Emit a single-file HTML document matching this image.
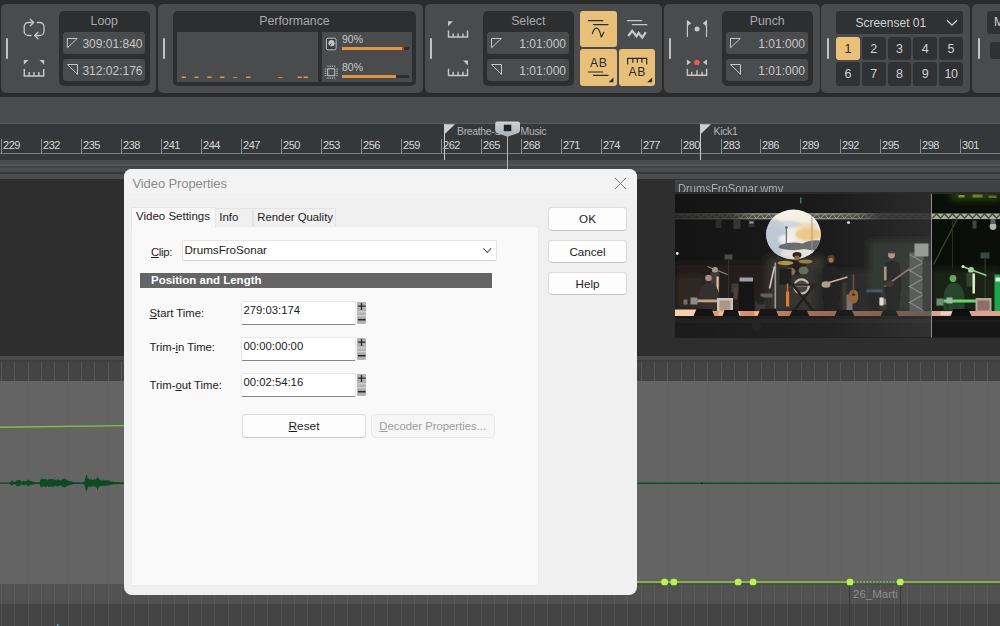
<!DOCTYPE html>
<html><head><meta charset="utf-8"><title>Video Properties</title>
<style>
html,body{margin:0;padding:0}
html{overflow:hidden;width:1000px;height:626px;background:#2a2b2d}
body{width:1000px;height:626px;overflow:hidden;position:relative;background:#2a2b2d;font-family:"Liberation Sans",sans-serif;}
.a{position:absolute}
.panel{position:absolute;top:4px;height:88.6px;background:#4a4b4d;border-radius:5px}
.hd{position:absolute;top:38px;width:2.1px;height:21px;background:#c2c2c2;border-radius:1.5px}
.dk{position:absolute;top:11px;height:75px;background:#2d2e30;border-radius:5px}
.fld{position:absolute;height:22px;background:#4a4b4d;border-radius:3px}
.ttl{position:absolute;top:14px;height:15px;line-height:15px;font-size:12.3px;color:#a9aaab;text-align:center}
.fv{position:absolute;height:22px;line-height:24.5px;font-size:12px;color:#c6c6c6;text-align:right}
.amber{position:absolute;background:#e8c07a;border-radius:3px}
.nb{position:absolute;width:23.5px;height:23.5px;background:#2f3133;border-radius:3px;color:#d2d2d2;font-size:12.5px;line-height:24px;text-align:center}
.nb.on{background:#e8c07a;color:#2b2b2b}
.tk{position:absolute;top:139px;width:1px;height:14px;background:#8c8d90}
.tl{position:absolute;top:138px;height:14px;line-height:14px;font-size:11px;letter-spacing:-0.55px;color:#d8d8d8}
.mk{position:absolute;top:125px;font-size:10.5px;letter-spacing:-0.35px;line-height:12px;color:#b4b5b7}
svg{position:absolute;overflow:visible}
/* dialog */
.dlg{position:absolute;left:124px;top:168px;width:513px;height:427px;font-size:11.3px;color:#1b1b1b}
.btn{position:absolute;box-sizing:border-box;background:#fdfdfd;border:1px solid #dcdcdc;border-bottom-color:#c6c6c6;border-radius:4px;text-align:center;font-size:11.6px;line-height:21px;height:23.5px}
.tab{position:absolute;white-space:nowrap;box-sizing:border-box;border:1px solid #e3e3e3;border-bottom:none;background:#f0f0f0;height:18px;top:40.2px;font-size:11.5px;line-height:17px}
.inp{position:absolute;box-sizing:border-box;left:117px;width:115px;height:23.5px;background:#fff;border:1px solid #e8e8e8;border-bottom:1px solid #868686;border-radius:2px;line-height:17.2px;padding-left:1.5px}
.lbl{position:absolute;left:25.5px;height:14px;line-height:14px}
u{text-decoration-thickness:1px;text-underline-offset:1px}
.spin{position:absolute;left:233px;width:9px;height:23px}
</style></head><body>

<!-- ===== TOOLBAR ===== -->
<div class="panel" style="left:1px;width:155px"></div>
<div class="panel" style="left:158px;width:265px"></div>
<div class="panel" style="left:425px;width:237px"></div>
<div class="panel" style="left:664px;width:155.5px"></div>
<div class="panel" style="left:821px;width:149px"></div>
<div class="panel" style="left:972px;width:40px"></div>
<div class="hd" style="left:6px"></div><div class="hd" style="left:163px"></div><div class="hd" style="left:430px"></div>
<div class="hd" style="left:669px"></div><div class="hd" style="left:826.5px"></div><div class="hd" style="left:977.5px"></div>

<!-- Loop -->
<div class="dk" style="left:59px;width:90.5px"></div>
<div class="ttl" style="left:59px;width:90.5px">Loop</div>
<div class="fld" style="left:63px;top:32px;width:82px"></div>
<div class="fld" style="left:63px;top:59px;width:82px"></div>
<div class="fv" style="left:63px;top:32px;width:79.5px">309:01:840</div>
<div class="fv" style="left:63px;top:59px;width:79.5px">312:02:176</div>

<!-- Performance -->
<div class="dk" style="left:173px;width:243px"></div>
<div class="ttl" style="left:173px;width:243px">Performance</div>
<div class="a" style="left:177px;top:32px;width:140.5px;height:49.5px;background:#4a4b4d"></div>
<div class="a" style="left:322px;top:32px;width:90px;height:49.5px;background:#4a4b4d"></div>
<div class="a" style="left:342px;top:33.3px;font-size:10.5px;line-height:12px;color:#c8c8c8">90%</div>
<div class="a" style="left:342px;top:61.3px;font-size:10.5px;line-height:12px;color:#c8c8c8">80%</div>
<div class="a" style="left:342px;top:46.5px;width:67px;height:3.5px;background:#2d2e30"></div>
<div class="a" style="left:342px;top:46.5px;width:60px;height:3.5px;background:#e09440"></div>
<div class="a" style="left:402px;top:46.5px;width:1.5px;height:3.5px;background:#d8352a"></div>
<div class="a" style="left:342px;top:74.5px;width:67px;height:3.5px;background:#2d2e30"></div>
<div class="a" style="left:342px;top:74.5px;width:53.6px;height:3.5px;background:#e09440"></div>

<!-- Select -->
<div class="dk" style="left:483px;width:90.5px"></div>
<div class="ttl" style="left:483px;width:90.5px">Select</div>
<div class="fld" style="left:487px;top:32px;width:82px"></div>
<div class="fld" style="left:487px;top:59px;width:82px"></div>
<div class="fv" style="left:487px;top:32px;width:79px">1:01:000</div>
<div class="fv" style="left:487px;top:59px;width:79px">1:01:000</div>
<div class="amber" style="left:580px;top:11px;width:37px;height:36px"></div>
<div class="amber" style="left:580px;top:49px;width:37px;height:37px"></div>
<div class="amber" style="left:618.6px;top:49px;width:36.7px;height:37px"></div>

<!-- Punch -->
<div class="dk" style="left:722px;width:90.5px"></div>
<div class="ttl" style="left:722px;width:90.5px">Punch</div>
<div class="fld" style="left:726px;top:32px;width:82px"></div>
<div class="fld" style="left:726px;top:59px;width:82px"></div>
<div class="fv" style="left:726px;top:32px;width:79px">1:01:000</div>
<div class="fv" style="left:726px;top:59px;width:79px">1:01:000</div>

<!-- Screenset -->
<div class="a" style="left:836.3px;top:11px;width:127px;height:23px;background:#2f3133;border-radius:3px"></div>
<div class="a" style="left:836.3px;top:11px;width:109px;height:23px;line-height:24.5px;text-align:center;font-size:12px;color:#d2d2d2">Screenset 01</div>
<div class="nb on" style="left:836.3px;top:36.6px">1</div>
<div class="nb" style="left:862px;top:36.6px">2</div>
<div class="nb" style="left:887.7px;top:36.6px">3</div>
<div class="nb" style="left:913.4px;top:36.6px">4</div>
<div class="nb" style="left:939.2px;top:36.6px">5</div>
<div class="nb" style="left:836.3px;top:62.4px">6</div>
<div class="nb" style="left:862px;top:62.4px">7</div>
<div class="nb" style="left:887.7px;top:62.4px">8</div>
<div class="nb" style="left:913.4px;top:62.4px">9</div>
<div class="nb" style="left:939.2px;top:62.4px;letter-spacing:-0.5px">10</div>
<!-- panel 6 -->
<div class="a" style="left:987px;top:11px;width:20px;height:22.5px;background:#2f3133;border-radius:3px"></div>
<div class="a" style="left:994px;top:11px;height:23px;line-height:23px;font-size:12px;color:#d2d2d2">M</div>
<div class="a" style="left:990px;top:42px;width:20px;height:16.5px;background:#2f3133;border-radius:3px"></div>

<!-- toolbar icons -->
<svg id="tbicons" style="left:0;top:0" width="1000" height="97" fill="none" stroke="#c6c6c6" stroke-width="1.2">
<!-- loop icon -->
<g stroke-linecap="round" stroke-linejoin="round" stroke-width="1.3">
<path d="M33.3 22.5H28.5a4.3 4.3 0 0 0-4.3 4.3v4.4a4.3 4.3 0 0 0 4.3 4.3H31"/>
<path d="M30.3 19.3L33.6 22.5L30.3 25.7"/>
<path d="M37.3 22.5H39.7a4.3 4.3 0 0 1 4.3 4.3v4.4a4.3 4.3 0 0 1-4.3 4.3H35"/>
<path d="M38 32.3L34.7 35.5L38 38.7"/>
</g>
<!-- loop ruler icon -->
<path d="M23.8 60h4.8l-4.8 4.8zM44.2 60h-4.8l4.8 4.8z" fill="#c6c6c6" stroke="none"/>
<path stroke-width="1.45" d="M24.3 69V76H43.7V69M29.2 72V76M34 72V76M38.8 72V76"/>
<!-- field triangles -->
<g stroke-width="1">
<path d="M67.4 38.5H77.2L67.4 47.8Z M67.5 64.5H77.5V74.3Z"/>
<path d="M491.5 38.5H501.3L491.5 47.8Z M491.5 64.5H501.5V74.3Z"/>
<path d="M730.5 38.5H740.3L730.5 47.8Z M730.5 64.5H740.5V74.3Z"/>
</g>
<!-- perf dashes -->
<path d="M181.6 77.3h4.4M194.3 77.3h4.3M207.3 77.3h4.4M220 77.3h4.5M246 77.3h4.5M297.5 77.3h4.5M303.6 77.3h4.4" stroke="#e09440" stroke-width="1.5"/>
<path d="M233 77.6h4.4M278 77.6h4.5" stroke="#e09440" stroke-width="0.9"/>
<!-- disk icon -->
<rect x="326.5" y="38.2" width="9.6" height="11.6" rx="1.6" fill="#3a3b3d" stroke="#bdbdbd" stroke-width="1"/>
<circle cx="331.5" cy="43.2" r="3.1" fill="#c4c4c4" stroke="none"/>
<path d="M329 46.5L331.5 43.5" stroke="#3a3b3d" stroke-width="0.9"/>
<!-- cpu icon -->
<rect x="327.7" y="68.7" width="7" height="7" stroke-width="1"/>
<path d="M328 65.5v1.5M330.2 65.5v1.5M332.4 65.5v1.5M334.6 65.5v1.5M328 77.3v1.5M330.2 77.3v1.5M332.4 77.3v1.5M334.6 77.3v1.5M324.8 69h1.5M324.8 71.2h1.5M324.8 73.4h1.5M324.8 75.6h1.5M336.3 69h1.5M336.3 71.2h1.5M336.3 73.4h1.5M336.3 75.6h1.5" stroke-width="0.9"/>
<!-- select icons -->
<path d="M448 21.2h5l-5 5zM468 60.4h-5l5 5z" fill="#c6c6c6" stroke="none"/>
<path stroke-width="1.45" d="M448.5 30.4V37H467.5V30.4M453.2 33.4V37M458.1 33.4V37M463 33.4V37"/>
<path stroke-width="1.45" d="M448.5 68.8V75.4H467.5V68.8M453.2 71.8V75.4M458.1 71.8V75.4M463 71.8V75.4"/>
<!-- select buttons -->
<g stroke="#2b2b2b" stroke-width="1.2" stroke-linecap="round">
<path d="M588.4 20.7H602.8M593.5 24.6H608"/>
<path d="M592.4 33.6C593.4 30 595 28.1 596.8 28.1C599.2 28.1 600 32.5 601.3 37.1L603.9 32.3" stroke-linejoin="round"/>
<path d="M588.5 72H602.8M593.6 75.4H608"/>
<path d="M627.6 64.5V58.4H646.7V64.5M632.8 58.4V62.8M637.3 58.4V62.8M641.9 58.4V62.8" stroke-linecap="butt"/>
</g>
<path d="M613.4 77.6V82.3H608.6zM652.1 77.6V82.3H647.3z" fill="#2b2b2b" stroke="none"/>
<text x="598.8" y="67" text-anchor="middle" font-family="Liberation Sans, sans-serif" font-size="12.2" letter-spacing="0.7" fill="#2b2b2b" stroke="none">AB</text>
<text x="637.3" y="75.5" text-anchor="middle" font-family="Liberation Sans, sans-serif" font-size="12.2" letter-spacing="0.7" fill="#2b2b2b" stroke="none">AB</text>
<path d="M626.9 20.7H642.2M631.8 24.6H647.3" stroke-width="1.3"/>
<path d="M628.3 36L632.1 30.8L636.5 36.2L638.6 33L642.3 37.6L645.8 32.2" stroke-width="2.3" stroke-linejoin="miter"/>
<!-- punch icons -->
<path d="M687.4 20.5V37M706.5 20.5V37"/>
<path d="M687.4 20.3L691.2 23.3L687.4 26.2zM706.5 20.3L702.7 23.3L706.5 26.2z" fill="#c6c6c6" stroke="none"/>
<circle cx="697" cy="29" r="2.5" fill="#c6c6c6" stroke="none"/>
<path d="M686.9 59.5L691 62.3L686.9 65.2zM707 59.5L702.9 62.3L707 65.2z" fill="#c6c6c6" stroke="none"/>
<circle cx="697" cy="62.4" r="2.7" fill="#ee5b5b" stroke="none"/>
<path stroke-width="1.45" d="M687.4 68.7V75.3H706.6V68.7M691.8 71.7V75.3M697 70.3V75.3M702 71.7V75.3"/>
<!-- screenset chevron -->
<path d="M947 20.3L952 25.2L957 20.3" stroke="#d2d2d2" stroke-width="1.2"/>

</svg>

<!-- ===== BAND + RULER ===== -->
<div class="a" style="left:0;top:97px;width:1000px;height:26px;background:#4a4b4d"></div>
<div class="a" style="left:0;top:123px;width:1000px;height:1px;background:#5b5c5e"></div>
<div class="a" style="left:0;top:124px;width:1000px;height:36px;background:#363739"></div>
<div class="a" style="left:0;top:153px;width:1000px;height:1px;background:#7b7c7f"></div>
<div class="tk" style="left:1px"></div>
<div class="tk" style="left:41px"></div>
<div class="tk" style="left:81px"></div>
<div class="tk" style="left:121px"></div>
<div class="tk" style="left:161px"></div>
<div class="tk" style="left:201px"></div>
<div class="tk" style="left:241px"></div>
<div class="tk" style="left:281px"></div>
<div class="tk" style="left:321px"></div>
<div class="tk" style="left:361px"></div>
<div class="tk" style="left:401px"></div>
<div class="tk" style="left:441px"></div>
<div class="tk" style="left:481px"></div>
<div class="tk" style="left:521px"></div>
<div class="tk" style="left:561px"></div>
<div class="tk" style="left:601px"></div>
<div class="tk" style="left:641px"></div>
<div class="tk" style="left:681px"></div>
<div class="tk" style="left:721px"></div>
<div class="tk" style="left:760px"></div>
<div class="tk" style="left:800px"></div>
<div class="tk" style="left:840px"></div>
<div class="tk" style="left:880px"></div>
<div class="tk" style="left:920px"></div>
<div class="tk" style="left:960px"></div>
<div class="tl" style="left:3.1px">229</div>
<div class="tl" style="left:43.1px">232</div>
<div class="tl" style="left:83.1px">235</div>
<div class="tl" style="left:123.1px">238</div>
<div class="tl" style="left:163.1px">241</div>
<div class="tl" style="left:203.1px">244</div>
<div class="tl" style="left:243.1px">247</div>
<div class="tl" style="left:283.1px">250</div>
<div class="tl" style="left:323.1px">253</div>
<div class="tl" style="left:363.1px">256</div>
<div class="tl" style="left:403.1px">259</div>
<div class="tl" style="left:443.1px">262</div>
<div class="tl" style="left:483.1px">265</div>
<div class="tl" style="left:523.1px">268</div>
<div class="tl" style="left:563.1px">271</div>
<div class="tl" style="left:603.1px">274</div>
<div class="tl" style="left:643.1px">277</div>
<div class="tl" style="left:683.1px">280</div>
<div class="tl" style="left:723.1px">283</div>
<div class="tl" style="left:762.1px">286</div>
<div class="tl" style="left:802.1px">289</div>
<div class="tl" style="left:842.1px">292</div>
<div class="tl" style="left:882.1px">295</div>
<div class="tl" style="left:922.1px">298</div>
<div class="tl" style="left:962.1px">301</div>
<div class="a" style="left:0;top:160px;width:1000px;height:19px;background:#4a4b4d"></div>
<div class="a" style="left:0;top:164px;width:1000px;height:1.5px;background:#545557"></div>
<div class="a" style="left:0;top:165.5px;width:1000px;height:2px;background:#434446"></div>
<div class="a" style="left:0;top:172px;width:1000px;height:2px;background:#363739"></div>
<!-- markers -->
<div class="a" style="left:444px;top:124px;width:1px;height:36px;background:#c9c9c9"></div>
<div class="a" style="left:700px;top:124px;width:1px;height:36px;background:#c9c9c9"></div>
<svg style="left:0;top:0" width="1000" height="170"><path d="M444 124.3h11l-11 10.5z M700 124.3h11l-11 10.5z" fill="#cfcfd1"/></svg>
<div class="mk" style="left:457px">Breathe-S</div>
<div class="mk" style="left:520.5px">Music</div>
<div class="mk" style="left:713.5px">Kick1</div>
<!-- playhead -->
<div class="a" style="left:507.2px;top:134px;width:1.2px;height:492px;background:#b4b4b4"></div>
<svg style="left:0;top:0" width="1000" height="170">
<defs><linearGradient id="ph" x1="0" y1="0" x2="0" y2="1"><stop offset="0" stop-color="#cfd2d5"/><stop offset="1" stop-color="#adb0b3"/></linearGradient></defs>
<path d="M497.1 121.5h21a1.9 1.9 0 0 1 1.9 1.9v6.6q0 2.6-3 3.5l-9.4 3.2l-9.4-3.2q-3-.9-3-3.5v-6.6a1.9 1.9 0 0 1 1.9-1.9z" fill="url(#ph)"/>
<rect x="503.8" y="124.7" width="7.5" height="6.5" fill="#242426"/>
</svg>

<!-- ===== VIDEO TRACK ===== -->
<div class="a" style="left:0;top:179px;width:1000px;height:177px;background:#2e2e2f"></div>
<div class="a" style="left:674.5px;top:180px;width:326px;height:12px;background:#404143;border-top:1px solid #48494b;box-sizing:border-box;overflow:hidden"><div class="a" style="left:3.2px;top:-0.2px;font-size:13.6px;line-height:15px;color:#a9aaac;white-space:nowrap;transform:scaleX(0.825);transform-origin:0 0">DrumsFroSonar.wmv</div></div>
<div class="a" style="left:674.5px;top:192px;width:326px;height:2px;background:#29292b"></div>
<svg style="left:674.5px;top:193.6px" width="326" height="143" viewBox="674.5 193.5 326 143">
<defs>
<linearGradient id="scr" x1="0" y1="0" x2="0" y2="1"><stop offset="0" stop-color="#f6f2e6"/><stop offset="0.5" stop-color="#ecebe6"/><stop offset="1" stop-color="#d6d4d0"/></linearGradient>
<linearGradient id="trs" gradientUnits="userSpaceOnUse" x1="674.5" y1="0" x2="930.5" y2="0"><stop offset="0" stop-color="#3c3c3a"/><stop offset="0.22" stop-color="#55564f"/><stop offset="0.3" stop-color="#a3a59a"/><stop offset="0.4" stop-color="#b4b6aa"/><stop offset="0.62" stop-color="#a8aa9e"/><stop offset="0.72" stop-color="#8a8c84"/><stop offset="0.8" stop-color="#3c3d3c"/><stop offset="1" stop-color="#2e2f2e"/></linearGradient>
<linearGradient id="flr" x1="0" y1="0" x2="1" y2="0"><stop offset="0" stop-color="#f2c4a4"/><stop offset="0.12" stop-color="#e09a78"/><stop offset="0.3" stop-color="#d08a68"/><stop offset="0.55" stop-color="#9a6650"/><stop offset="1" stop-color="#5a4640"/></linearGradient>
<linearGradient id="haze" x1="0" y1="0" x2="1" y2="0"><stop offset="0" stop-color="#fff" stop-opacity="0.02"/><stop offset="0.6" stop-color="#fff" stop-opacity="0.05"/><stop offset="1" stop-color="#dfe6e0" stop-opacity="0.13"/></linearGradient>
<filter id="bl" x="-5%" y="-5%" width="110%" height="110%"><feGaussianBlur stdDeviation="0.7"/></filter>
<filter id="bl3" x="-20%" y="-20%" width="140%" height="140%"><feGaussianBlur stdDeviation="1.3"/></filter>
<filter id="bl2" x="-30%" y="-30%" width="160%" height="160%"><feGaussianBlur stdDeviation="3.5"/></filter>
<clipPath id="c1"><rect x="674.5" y="193.5" width="256" height="143.5"/></clipPath>
<clipPath id="c2"><rect x="931.5" y="193.5" width="70" height="143.5"/></clipPath>
<clipPath id="cc"><ellipse cx="793" cy="234" rx="27.4" ry="25"/></clipPath>
</defs>
<!-- thumb 1 -->
<g clip-path="url(#c1)">
<rect x="674.5" y="193.5" width="256" height="143.5" fill="#0f0f0f"/>
<g filter="url(#bl2)">
<rect x="674" y="262" width="100" height="50" fill="#1f1613"/>
<rect x="674" y="275" width="30" height="36" fill="#2a201c"/>
<rect x="766" y="256" width="58" height="56" fill="#2d2927"/>
<rect x="815" y="270" width="60" height="42" fill="#1f1b1b"/>
<rect x="868" y="240" width="64" height="72" fill="#232524"/>
</g>
<g filter="url(#bl)">
<!-- truss -->
<rect x="674.5" y="213" width="256" height="5.6" fill="url(#trs)" opacity="0.38"/>
<path d="M674.5 213.4H931M674.5 218.3H931" stroke="url(#trs)" stroke-width="1" opacity="0.9"/>
<path d="M676 218l4-4.5l4 4.5l4-4.5l4 4.5l4-4.5l4 4.5l4-4.5l4 4.5l4-4.5l4 4.5l4-4.5l4 4.5l4-4.5l4 4.5l4-4.5l4 4.5l4-4.5l4 4.5l4-4.5l4 4.5l4-4.5l4 4.5l4-4.5l4 4.5l4-4.5l4 4.5l4-4.5l4 4.5l4-4.5l4 4.5l4-4.5l4 4.5l4-4.5l4 4.5l4-4.5l4 4.5l4-4.5l4 4.5l4-4.5l4 4.5l4-4.5l4 4.5l4-4.5l4 4.5l4-4.5l4 4.5l4-4.5l4 4.5l4-4.5l4 4.5l4-4.5l4 4.5l4-4.5l4 4.5l4-4.5l4 4.5l4-4.5l4 4.5l4-4.5l4 4.5l4-4.5l4 4.5l4-4.5" stroke="url(#trs)" stroke-width="1" fill="none" opacity="0.75"/>
<!-- hanging lights -->
<rect x="715" y="218.5" width="6" height="9" fill="#262624"/><rect x="733" y="218.5" width="7" height="10" fill="#302f2a"/><rect x="748" y="218.5" width="6" height="8" fill="#2a2a28"/>
<rect x="749" y="221" width="4" height="2" fill="#9a9a96"/>
<circle cx="848" cy="222" r="1.6" fill="#c8c8c8"/>
<circle cx="676.8" cy="253" r="1.4" fill="#e8e8e8"/>
<rect x="799.5" y="197" width="1.5" height="6" fill="#3c6e62"/>
<!-- light stand -->
<rect x="724" y="254" width="8" height="5" fill="#48443e"/><rect x="727.5" y="258" width="1.2" height="40" fill="#2e2c2a"/>
<!-- screen circle -->
<ellipse cx="793" cy="234" rx="27.4" ry="25" fill="url(#scr)"/>
<g clip-path="url(#cc)">
<g filter="url(#bl3)">
<ellipse cx="774" cy="238" rx="13" ry="19" fill="#b4bfd0" opacity="0.85"/>
<ellipse cx="786" cy="224" rx="16" ry="3.5" fill="#c6ccd6" opacity="0.8"/>
<ellipse cx="808" cy="233.5" rx="13" ry="6.5" fill="#f0c278" opacity="0.9"/>
<ellipse cx="806" cy="225" rx="12" ry="2.8" fill="#ecd0a8" opacity="0.8"/>
<ellipse cx="786" cy="239" rx="8" ry="5" fill="#f2f2f0" opacity="0.9"/>
<ellipse cx="798" cy="252" rx="18" ry="5" fill="#e9e4dc" opacity="0.8"/>
</g>
<path d="M780 244.5q10-4 22-1.5q8-4 18-3v9q-9 1.5-16-0.5q-12 2.5-24-0.5q-4-1.5 0-3.5z" fill="#66666a"/>
<rect x="785.3" y="227" width="1.2" height="18" fill="#66686c"/><circle cx="785.9" cy="227" r="1.3" fill="#55585c"/>
<rect x="811" y="215" width="0.9" height="36" fill="#9a9488"/>
</g>
<!-- drummer + kit -->
<ellipse cx="796.5" cy="254.5" rx="4.5" ry="3" fill="#2a1e14"/><circle cx="796.5" cy="257.5" r="2.6" fill="#8a5e3c"/>
<rect x="789" y="260" width="16" height="14" fill="#1a1614"/>
<ellipse cx="785" cy="262.5" rx="8" ry="2.2" fill="#a8923e"/><ellipse cx="805" cy="261" rx="7" ry="2" fill="#8e7c38"/>
<ellipse cx="790" cy="271" rx="5" ry="4" fill="#7a6e48"/><ellipse cx="803" cy="270" rx="5" ry="4" fill="#5a6a50"/>
<rect x="774" y="262" width="1.6" height="46" fill="#9a9894"/><path d="M774 266l-5 22" stroke="#c9c5c1" stroke-width="1.6"/>
<rect x="779" y="268" width="12" height="16" fill="#141414"/>
<circle cx="801" cy="286" r="8.3" fill="#bdb9b3"/><circle cx="801" cy="286" r="6" fill="#3e3a38"/><rect x="796" y="283" width="10" height="3" fill="#8e8a86"/>
<path d="M792 284l22 28M814 284l-22 28" stroke="#17130f" stroke-width="2.2"/><rect x="788" y="283" width="30" height="2.2" fill="#221c18"/>
<rect x="785.5" y="291" width="3.2" height="15" fill="#d9772c"/><rect x="786.3" y="283" width="1.5" height="9" fill="#b86a30"/>
<!-- left players -->
<circle cx="714.5" cy="269.5" r="3" fill="#a79b8f"/><rect x="710" y="272" width="9" height="14" fill="#3b3531"/>
<rect x="716" y="276" width="2.2" height="16" fill="#efbc8c"/>
<path d="M707 266l20 8" stroke="#8a8a86" stroke-width="1.1"/>
<circle cx="708" cy="277.5" r="3.3" fill="#a78a78"/>
<path d="M698 296q2-14 10-14q9 0 11 14v14h-21z" fill="#2f2b29"/>
<rect x="697" y="299" width="31" height="2.8" fill="#c2a27c"/><rect x="699" y="302" width="2" height="10" fill="#2a2624"/><rect x="724" y="302" width="2" height="10" fill="#2a2624"/>
<rect x="716.5" y="297.5" width="16" height="15" fill="#cbc1b7"/><rect x="719" y="300" width="11" height="10" fill="#a99585"/>
<rect x="690" y="297" width="7" height="7" fill="#8a8a88"/><rect x="683" y="299" width="4" height="5" fill="#6e6a66"/>
<rect x="738.5" y="277" width="14.5" height="36" fill="#0c0c0c"/><rect x="739" y="277" width="13.5" height="4" fill="#9c9ca6"/>
<rect x="731" y="283" width="7" height="9" fill="#3a3432"/><rect x="733" y="287" width="4" height="12" fill="#4a3a34"/>
<rect x="755" y="300" width="10" height="12" fill="#34302e"/><rect x="760" y="293" width="12" height="4" fill="#5e5a5a"/>
<!-- guitarist -->
<ellipse cx="830.5" cy="258.5" rx="3.6" ry="4.2" fill="#4a3424"/><circle cx="830.5" cy="259.5" r="2.2" fill="#9a7256"/>
<path d="M822 268q8-6 17 0l1 22l-2 24h-14l-2-24z" fill="#141212"/>
<path d="M822 284l25-7.5" stroke="#c7b391" stroke-width="1.8"/><ellipse cx="825.5" cy="284" rx="4.5" ry="3.3" fill="#a99a84"/>
<rect x="842" y="282" width="4" height="30" fill="#2e2a28"/><rect x="846" y="294" width="6" height="16" fill="#6e6a66"/>
<ellipse cx="853" cy="296" rx="5" ry="7" fill="#8d5a2c"/><rect x="852.2" y="274" width="1.6" height="18" fill="#5e4630"/><circle cx="853" cy="294" r="1.6" fill="#3a2414"/>
<rect x="858" y="286" width="10" height="26" fill="#1d1b1b"/>
<rect x="866" y="289" width="16" height="3" fill="#3a4a5a"/><rect x="868" y="292" width="12" height="18" fill="#191919"/>
<rect x="879" y="298" width="9" height="6" fill="#77726c"/><rect x="879" y="297" width="4" height="8" fill="#dedad4"/>
<!-- bass player -->
<circle cx="891" cy="254.5" r="3.4" fill="#a98d77"/><rect x="888.5" y="250.5" width="5" height="2.4" fill="#3a2e26"/>
<path d="M884 263q7-5 15 0l2 22l-3 28h-11l-3-28z" fill="#121212"/>
<path d="M884 286l34-24" stroke="#7e6c58" stroke-width="1.8"/><ellipse cx="889" cy="283.5" rx="5" ry="3.3" fill="#2e2624"/>
<rect x="883.5" y="266" width="2.6" height="14" fill="#a58a76"/>
<!-- tower -->
<rect x="909" y="252" width="14" height="60" fill="#4a4b4a"/><path d="M909 254l14 8l-14 8l14 8l-14 8l14 8l-14 8l14 8" stroke="#7e807e" stroke-width="1.2" fill="none"/>
<rect x="914" y="243" width="14" height="13" fill="#8e908e"/><rect x="922" y="260" width="9" height="50" fill="#2a2b2b"/>
<!-- floor -->
<rect x="674.5" y="310.5" width="256" height="5" fill="url(#flr)"/>
<rect x="674.5" y="309" width="27" height="6.5" fill="#f6cdb1"/>
<rect x="718" y="311" width="22" height="4" fill="#f2bc8e"/><rect x="754" y="311" width="8" height="4" fill="#efb78d"/>
<rect x="674.5" y="315.5" width="256" height="22" fill="#161616"/><rect x="674.5" y="319" width="256" height="3.5" fill="#1f1f1f"/>
<rect x="674.5" y="328" width="256" height="9" fill="#131313"/>
<!-- monitors -->
<path d="M693 315.5l3-7h15l3 7zM722 315.5l2-6h13l2 6zM757 315.5l3-7h15l3 7zM789 315.5l3-6h14l3 6zM834 315.5l3-6h14l3 6zM880 315.5l3-6h12l3 6z" fill="#0c0c0c"/>
<circle cx="760" cy="300" r="4" fill="#1a1a1a"/><circle cx="756" cy="326" r="5" fill="#1c1c1c"/>
</g>
<rect x="674.5" y="193.5" width="256" height="143.5" fill="url(#haze)"/>
</g>
<rect x="930.5" y="193.5" width="1" height="143.5" fill="#8e8e8e"/>
<!-- thumb 2 -->
<g clip-path="url(#c2)">
<rect x="931.5" y="193.5" width="70" height="143.5" fill="#0a0e08"/>
<g filter="url(#bl2)"><rect x="931" y="268" width="70" height="44" fill="#1b2317"/><rect x="950" y="192" width="50" height="7" fill="#2e4a0e"/></g>
<g filter="url(#bl)">
<rect x="958" y="194.5" width="6" height="2.5" fill="#7e9a1e"/><rect x="972" y="194" width="10" height="3" fill="#6a8a1a"/><rect x="988" y="195" width="8" height="2.5" fill="#55761a"/>
<rect x="931.5" y="213" width="70" height="5.6" fill="#a8b09a"/>
<path d="M932 217.5l4-4l4 4l4-4l4 4l4-4l4 4l4-4l4 4l4-4l4 4l4-4l4 4l4-4l4 4l4-4l4 4l4-4" stroke="#1a2014" stroke-width="1.3" fill="none" opacity="0.7"/>
<path d="M957 218l-24 46" stroke="#3a4a36" stroke-width="1.2"/><path d="M952 218v50" stroke="#28331f" stroke-width="1"/>
<circle cx="992.5" cy="226" r="3.4" fill="#a9b9ab"/><rect x="990" y="218.5" width="5" height="5" fill="#56665a"/>
<rect x="972" y="220" width="4" height="8" fill="#3e4a3c"/>
<rect x="980" y="252" width="9" height="6" fill="#3a463a"/><rect x="984" y="258" width="1.2" height="40" fill="#2e3a2c"/>
<circle cx="970.5" cy="269.5" r="3" fill="#b9cdb5"/><rect x="966" y="272" width="9" height="14" fill="#31452f"/>
<rect x="972" y="273" width="2.4" height="20" fill="#e6f2d0"/>
<path d="M962 266l24 9" stroke="#8ed08c" stroke-width="1.5"/><circle cx="962.5" cy="266" r="1.5" fill="#c9efc3"/>
<circle cx="952.5" cy="278" r="3.4" fill="#6ea46c"/>
<path d="M943 296q2-14 10-14q9 0 11 14v14h-21z" fill="#25442a"/>
<rect x="943" y="299" width="35" height="3" fill="#66d674"/><rect x="946" y="302" width="2" height="10" fill="#1e3a22"/>
<rect x="975" y="297.5" width="16" height="15" fill="#b1a79f"/><rect x="977" y="300" width="12" height="10" fill="#8e6e66"/>
<rect x="936" y="298" width="7" height="7" fill="#6e8e70"/><rect x="946" y="297" width="6" height="6" fill="#9ab89a"/>
<rect x="994" y="274" width="8" height="38" fill="#1fa848"/><rect x="995" y="277" width="6" height="4" fill="#e8f4e8"/>
<rect x="931.5" y="310.5" width="70" height="5" fill="#d9a391"/><rect x="940" y="311" width="30" height="4" fill="#f0cdbd"/>
<rect x="931.5" y="315.5" width="70" height="22" fill="#121212"/><rect x="931.5" y="319" width="70" height="3" fill="#1f1f1f"/>
<path d="M950 315.5l3-7h15l3 7z" fill="#0a0a0a"/>
</g>
</g>
</svg>


<!-- ===== TRACKS ===== -->
<div class="a" style="left:0;top:355.6px;width:1000px;height:4px;background:#48494b"></div>
<div class="a" style="left:0;top:359.6px;width:1000px;height:2px;background:#3e3f41"></div>
<div class="a" style="left:0;top:361.5px;width:1000px;height:19.5px;background:#444444 repeating-linear-gradient(90deg,transparent 0,transparent 1px,#575757 1px,#575757 2px,transparent 2px,transparent 13.325px)"></div>
<div class="a" style="left:0;top:381px;width:1000px;height:203px;background:#646464 repeating-linear-gradient(90deg,transparent 0,transparent 1px,#626262 1px,#626262 2px,transparent 2px,transparent 13.325px)"></div>
<div class="a" style="left:0;top:584px;width:1000px;height:20px;background:#515151 repeating-linear-gradient(90deg,transparent 0,transparent 1px,#5a5a5a 1px,#5a5a5a 2px,transparent 2px,transparent 13.325px)"></div>
<div class="a" style="left:0;top:604px;width:1000px;height:22px;background:#444444 repeating-linear-gradient(90deg,transparent 0,transparent 1px,#505050 1px,#505050 2px,transparent 2px,transparent 13.325px)"></div>
<svg style="left:0;top:0" width="1000" height="626">
<path d="M0 427.2L124 425.6" stroke="#8bbd3a" stroke-width="1.4" fill="none"/>
<path d="M0 483.1 L0.0 482.4 L0.5 482.4 L1.0 482.4 L1.5 482.4 L2.0 482.4 L2.5 482.4 L3.0 482.4 L3.5 482.4 L4.0 482.4 L4.5 482.4 L5.0 482.4 L5.5 482.4 L6.0 482.4 L6.5 482.4 L7.0 482.4 L7.5 482.4 L8.0 482.4 L8.5 482.4 L9.0 482.4 L9.5 482.1 L10.0 481.9 L10.5 482.1 L11.0 481.0 L11.5 481.4 L12.0 479.9 L12.5 481.1 L13.0 481.0 L13.5 481.8 L14.0 481.7 L14.5 482.2 L15.0 482.1 L15.5 482.0 L16.0 480.8 L16.5 480.8 L17.0 479.9 L17.5 480.8 L18.0 479.5 L18.5 480.1 L19.0 479.7 L19.5 480.3 L20.0 479.9 L20.5 480.5 L21.0 481.0 L21.5 481.7 L22.0 481.3 L22.5 481.7 L23.0 480.7 L23.5 481.3 L24.0 480.6 L24.5 481.3 L25.0 480.9 L25.5 481.5 L26.0 481.7 L26.5 481.3 L27.0 480.1 L27.5 480.8 L28.0 478.9 L28.5 479.9 L29.0 480.1 L29.5 481.0 L30.0 480.5 L30.5 481.2 L31.0 480.9 L31.5 481.2 L32.0 481.2 L32.5 481.9 L33.0 481.6 L33.5 482.0 L34.0 481.8 L34.5 482.0 L35.0 482.1 L35.5 482.2 L36.0 482.3 L36.5 482.3 L37.0 482.3 L37.5 482.3 L38.0 482.3 L38.5 482.3 L39.0 482.3 L39.5 482.3 L40.0 480.8 L40.5 480.3 L41.0 479.0 L41.5 480.2 L42.0 478.5 L42.5 479.0 L43.0 478.7 L43.5 479.6 L44.0 478.9 L44.5 479.4 L45.0 478.8 L45.5 479.5 L46.0 478.7 L46.5 480.1 L47.0 479.5 L47.5 480.4 L48.0 479.5 L48.5 479.9 L49.0 478.6 L49.5 478.8 L50.0 478.9 L50.5 479.5 L51.0 479.1 L51.5 479.5 L52.0 478.9 L52.5 478.8 L53.0 478.7 L53.5 480.1 L54.0 479.2 L54.5 479.9 L55.0 479.7 L55.5 480.2 L56.0 479.3 L56.5 480.4 L57.0 478.9 L57.5 479.4 L58.0 479.2 L58.5 480.4 L59.0 479.5 L59.5 479.9 L60.0 480.0 L60.5 480.8 L61.0 480.5 L61.5 480.0 L62.0 479.3 L62.5 478.9 L63.0 478.6 L63.5 479.5 L64.0 478.4 L64.5 478.5 L65.0 478.5 L65.5 480.1 L66.0 478.8 L66.5 480.1 L67.0 479.4 L67.5 480.5 L68.0 480.3 L68.5 481.2 L69.0 480.6 L69.5 481.3 L70.0 480.9 L70.5 481.4 L71.0 481.2 L71.5 481.6 L72.0 481.5 L72.5 481.9 L73.0 481.8 L73.5 482.0 L74.0 482.1 L74.5 482.3 L75.0 482.3 L75.5 482.3 L76.0 482.3 L76.5 482.3 L77.0 482.3 L77.5 482.3 L78.0 482.3 L78.5 482.3 L79.0 482.3 L79.5 482.3 L80.0 482.3 L80.5 482.3 L81.0 482.3 L81.5 482.3 L82.0 482.3 L82.5 482.3 L83.0 482.3 L83.5 482.3 L84.0 482.3 L84.5 481.6 L85.0 479.1 L85.5 477.5 L86.0 474.9 L86.5 475.3 L87.0 474.3 L87.5 477.8 L88.0 478.1 L88.5 479.0 L89.0 478.6 L89.5 480.4 L90.0 478.7 L90.5 480.0 L91.0 478.3 L91.5 480.2 L92.0 478.9 L92.5 480.5 L93.0 479.5 L93.5 480.3 L94.0 479.2 L94.5 479.2 L95.0 478.9 L95.5 480.1 L96.0 478.4 L96.5 479.3 L97.0 476.6 L97.5 477.8 L98.0 476.8 L98.5 478.5 L99.0 478.8 L99.5 479.8 L100.0 479.3 L100.5 480.7 L101.0 479.6 L101.5 480.7 L102.0 479.9 L102.5 480.9 L103.0 479.7 L103.5 479.7 L104.0 479.5 L104.5 480.8 L105.0 479.9 L105.5 481.2 L106.0 480.3 L106.5 480.3 L107.0 480.2 L107.5 480.5 L108.0 480.1 L108.5 481.0 L109.0 480.5 L109.5 480.9 L110.0 480.9 L110.5 481.2 L111.0 481.2 L111.5 481.9 L112.0 481.5 L112.5 481.6 L113.0 481.6 L113.5 481.8 L114.0 481.8 L114.5 482.0 L115.0 481.9 L115.5 481.9 L116.0 482.0 L116.5 482.0 L117.0 482.1 L117.5 482.1 L118.0 482.1 L118.5 482.2 L119.0 482.2 L119.5 482.2 L120.0 482.2 L120.5 482.2 L121.0 482.2 L121.5 482.2 L122.0 482.3 L122.5 482.3 L123.0 482.3 L123.5 482.3 L124.0 482.3 L124.0 483.9 L123.5 483.9 L123.0 483.9 L122.5 483.9 L122.0 483.9 L121.5 483.9 L121.0 483.9 L120.5 483.9 L120.0 483.9 L119.5 483.9 L119.0 484.0 L118.5 484.0 L118.0 484.0 L117.5 484.1 L117.0 484.1 L116.5 484.1 L116.0 484.2 L115.5 484.2 L115.0 484.2 L114.5 484.3 L114.0 484.3 L113.5 484.4 L113.0 484.4 L112.5 484.6 L112.0 484.5 L111.5 484.8 L111.0 484.4 L110.5 485.0 L110.0 484.8 L109.5 485.4 L109.0 484.8 L108.5 485.8 L108.0 485.1 L107.5 485.9 L107.0 485.7 L106.5 485.8 L106.0 485.3 L105.5 486.0 L105.0 485.6 L104.5 486.3 L104.0 485.9 L103.5 486.4 L103.0 485.1 L102.5 486.2 L102.0 485.9 L101.5 486.3 L101.0 485.6 L100.5 486.6 L100.0 485.5 L99.5 487.0 L99.0 486.4 L98.5 487.5 L98.0 488.7 L97.5 490.7 L97.0 487.8 L96.5 487.9 L96.0 486.3 L95.5 487.3 L95.0 486.5 L94.5 486.9 L94.0 485.4 L93.5 486.7 L93.0 485.4 L92.5 486.8 L92.0 485.6 L91.5 487.4 L91.0 486.5 L90.5 487.5 L90.0 486.0 L89.5 487.1 L89.0 485.8 L88.5 487.6 L88.0 486.2 L87.5 489.7 L87.0 489.5 L86.5 491.2 L86.0 490.5 L85.5 488.9 L85.0 486.8 L84.5 485.4 L84.0 483.9 L83.5 483.9 L83.0 483.9 L82.5 483.9 L82.0 483.9 L81.5 483.9 L81.0 483.9 L80.5 483.9 L80.0 483.9 L79.5 483.9 L79.0 483.9 L78.5 483.9 L78.0 483.9 L77.5 483.9 L77.0 483.9 L76.5 483.9 L76.0 483.9 L75.5 483.9 L75.0 483.9 L74.5 483.9 L74.0 484.0 L73.5 484.2 L73.0 484.2 L72.5 484.5 L72.0 484.3 L71.5 484.8 L71.0 484.9 L70.5 485.0 L70.0 484.7 L69.5 485.3 L69.0 484.6 L68.5 485.6 L68.0 485.3 L67.5 486.2 L67.0 485.6 L66.5 487.1 L66.0 485.9 L65.5 487.4 L65.0 487.4 L64.5 487.7 L64.0 486.5 L63.5 487.5 L63.0 486.2 L62.5 487.3 L62.0 486.5 L61.5 486.1 L61.0 485.1 L60.5 485.8 L60.0 485.0 L59.5 486.3 L59.0 485.7 L58.5 486.7 L58.0 485.6 L57.5 486.9 L57.0 485.7 L56.5 486.9 L56.0 485.6 L55.5 486.5 L55.0 485.1 L54.5 486.6 L54.0 485.9 L53.5 487.0 L53.0 487.0 L52.5 487.2 L52.0 486.6 L51.5 487.0 L51.0 485.5 L50.5 487.0 L50.0 486.3 L49.5 487.3 L49.0 487.1 L48.5 487.0 L48.0 486.0 L47.5 486.1 L47.0 486.1 L46.5 486.9 L46.0 487.1 L45.5 487.2 L45.0 486.8 L44.5 487.1 L44.0 485.6 L43.5 487.2 L43.0 485.9 L42.5 487.4 L42.0 486.5 L41.5 487.2 L41.0 486.9 L40.5 486.7 L40.0 485.1 L39.5 483.9 L39.0 483.9 L38.5 483.9 L38.0 483.9 L37.5 483.9 L37.0 483.9 L36.5 483.9 L36.0 483.9 L35.5 484.0 L35.0 484.1 L34.5 484.2 L34.0 484.2 L33.5 484.4 L33.0 484.3 L32.5 484.7 L32.0 484.7 L31.5 485.0 L31.0 484.6 L30.5 485.4 L30.0 485.2 L29.5 485.8 L29.0 485.3 L28.5 486.5 L28.0 485.9 L27.5 486.5 L27.0 484.9 L26.5 485.2 L26.0 484.1 L25.5 484.8 L25.0 484.9 L24.5 485.6 L24.0 485.3 L23.5 485.4 L23.0 484.6 L22.5 485.1 L22.0 484.3 L21.5 484.5 L21.0 484.4 L20.5 485.6 L20.0 485.4 L19.5 486.2 L19.0 486.3 L18.5 486.4 L18.0 485.5 L17.5 486.3 L17.0 485.9 L16.5 486.0 L16.0 484.6 L15.5 484.7 L15.0 484.1 L14.5 484.2 L14.0 483.9 L13.5 484.6 L13.0 484.4 L12.5 485.6 L12.0 485.6 L11.5 485.6 L11.0 484.8 L10.5 484.5 L10.0 484.0 L9.5 484.0 L9.0 483.8 L8.5 483.8 L8.0 483.8 L7.5 483.8 L7.0 483.8 L6.5 483.8 L6.0 483.8 L5.5 483.8 L5.0 483.8 L4.5 483.8 L4.0 483.8 L3.5 483.8 L3.0 483.8 L2.5 483.8 L2.0 483.8 L1.5 483.8 L1.0 483.8 L0.5 483.8 L0.0 483.8 Z" fill="#0d4a22"/>
<path d="M637 483.2H1000" stroke="#11502a" stroke-width="1.5"/>
<circle cx="702" cy="483.2" r="1" fill="#0b3a1b"/>
<path d="M637 582H850M900 582H1000" stroke="#82b53e" stroke-width="2.2"/><path d="M637 584H1000" stroke="#4a4a4a" stroke-width="1.6"/>
<path d="M850 582H900" stroke="#7dac40" stroke-width="2.2" stroke-dasharray="1.7 1.6"/>
<path d="M849.5 584V626M900.5 584V626" stroke="#3a3a3a" stroke-width="1"/>
<g fill="#b6f34f"><rect x="661.3" y="578.7" width="6.6" height="6.6" rx="2.6"/><rect x="670.5" y="578.7" width="6.6" height="6.6" rx="2.6"/><rect x="734.9" y="578.7" width="6.6" height="6.6" rx="2.6"/><rect x="749.7" y="578.7" width="6.6" height="6.6" rx="2.6"/><rect x="846.7" y="578.7" width="6.6" height="6.6" rx="2.6"/><rect x="896.9" y="578.7" width="6.6" height="6.6" rx="2.6"/></g>
<rect x="57" y="624" width="1.5" height="2" fill="#4fa8c0"/>
</svg>
<div class="a" style="left:853px;top:587px;font-size:11.5px;line-height:14px;color:#8e8e8e">26_Marti</div>

<!-- ===== DIALOG ===== -->
<div class="dlg">
<div class="a" style="left:0;top:0.6px;width:513.4px;height:426.4px;background:#f0f0f0;border-radius:8px;overflow:hidden"><div class="a" style="left:0;top:0;width:514px;height:30.6px;background:#f3f3f3"></div></div>
<div class="a" style="left:8.5px;top:8px;font-size:13px;line-height:16px;color:#8b8b8b;letter-spacing:-0.1px">Video Properties</div>
<svg style="left:490.5px;top:10px" width="11" height="11"><path d="M0 0L11 11M11 0L0 11" stroke="#777" stroke-width="1"/></svg>
<!-- tab body -->
<div class="a" style="left:7px;top:57.8px;width:407.5px;height:360.7px;background:#f9f9f9;box-sizing:border-box;border:1px solid #ebebeb"></div>
<div class="tab" style="left:91px;width:37.5px;padding-left:3.2px">Info</div>
<div class="tab" style="left:128.5px;width:83px;padding-left:3.8px;font-size:11.35px">Render Quality</div>
<div class="tab" style="left:7px;top:39px;width:84.5px;height:20.5px;background:#f9f9f9;padding-left:4px;line-height:16.5px;border-color:#e6e6e6">Video Settings</div>
<!-- buttons -->
<div class="btn" style="left:424px;top:39px;width:79px">OK</div>
<div class="btn" style="left:424px;top:71.6px;width:79px">Cancel</div>
<div class="btn" style="left:424px;top:103.8px;width:79px">Help</div>
<!-- clip -->
<div class="lbl" style="left:27px;top:76.8px;letter-spacing:-0.3px"><u>C</u>lip:</div>
<div class="a" style="left:58px;top:72px;width:315px;height:20.6px;box-sizing:border-box;background:#fff;border:1px solid #e4e4e4;border-bottom-color:#d0d0d0;border-radius:2px;line-height:18px;padding-left:1.5px;font-size:11.6px">DrumsFroSonar</div>
<svg style="left:359.3px;top:79.6px" width="10" height="6"><path d="M0.4 0.4L4.3 4.5L8.2 0.4" stroke="#5c5c5c" stroke-width="1.1" fill="none"/></svg>
<!-- section header -->
<div class="a" style="left:16px;top:104.8px;width:352px;height:15.4px;background:#656565;color:#fff;font-weight:bold;font-size:11.5px;line-height:15px"><span style="padding-left:11px">Position and Length</span></div>
<!-- fields -->
<div class="lbl" style="top:138px"><u>S</u>tart Time:</div>
<div class="lbl" style="top:172.2px">Trim-<u>i</u>n Time:</div>
<div class="lbl" style="top:210px">Trim-<u>o</u>ut Time:</div>
<div class="inp" style="top:133px">279:03:174</div>
<div class="inp" style="top:169px">00:00:00:00</div>
<div class="inp" style="top:205px">00:02:54:16</div>
<div class="spin" style="top:134px"><svg style="left:0;top:0" width="9" height="23"><rect x="0" y="0" width="9" height="22" rx="1.2" fill="#b2b2b2"/><rect x="0" y="9.2" width="9" height="1.3" fill="#d2d2d2"/><rect x="0" y="13" width="9" height="1.2" fill="#d2d2d2"/><path d="M1 4.200H8.500M4.500 1V8" stroke="#2a2a2a" stroke-width="1.300"/><path d="M1 17.700H8.500" stroke="#2a2a2a" stroke-width="1.600"/></svg></div>
<div class="spin" style="top:170px"><svg style="left:0;top:0" width="9" height="23"><rect x="0" y="0" width="9" height="22" rx="1.2" fill="#b2b2b2"/><rect x="0" y="9.2" width="9" height="1.3" fill="#d2d2d2"/><rect x="0" y="13" width="9" height="1.2" fill="#d2d2d2"/><path d="M1 4.200H8.500M4.500 1V8" stroke="#2a2a2a" stroke-width="1.300"/><path d="M1 17.700H8.500" stroke="#2a2a2a" stroke-width="1.600"/></svg></div>
<div class="spin" style="top:206px"><svg style="left:0;top:0" width="9" height="23"><rect x="0" y="0" width="9" height="22" rx="1.2" fill="#b2b2b2"/><rect x="0" y="9.2" width="9" height="1.3" fill="#d2d2d2"/><rect x="0" y="13" width="9" height="1.2" fill="#d2d2d2"/><path d="M1 4.200H8.500M4.500 1V8" stroke="#2a2a2a" stroke-width="1.300"/><path d="M1 17.700H8.500" stroke="#2a2a2a" stroke-width="1.600"/></svg></div>
<div class="btn" style="left:118px;top:246px;width:124px;font-size:11.8px;line-height:22.6px"><u>R</u>eset</div>
<div class="btn" style="left:247px;top:246px;width:123.5px;background:#f6f6f6;border-color:#e8e8e8;color:#9c9c9c;font-size:11.3px;line-height:22.6px"><u>D</u>ecoder Properties...</div>
</div>
</body></html>
